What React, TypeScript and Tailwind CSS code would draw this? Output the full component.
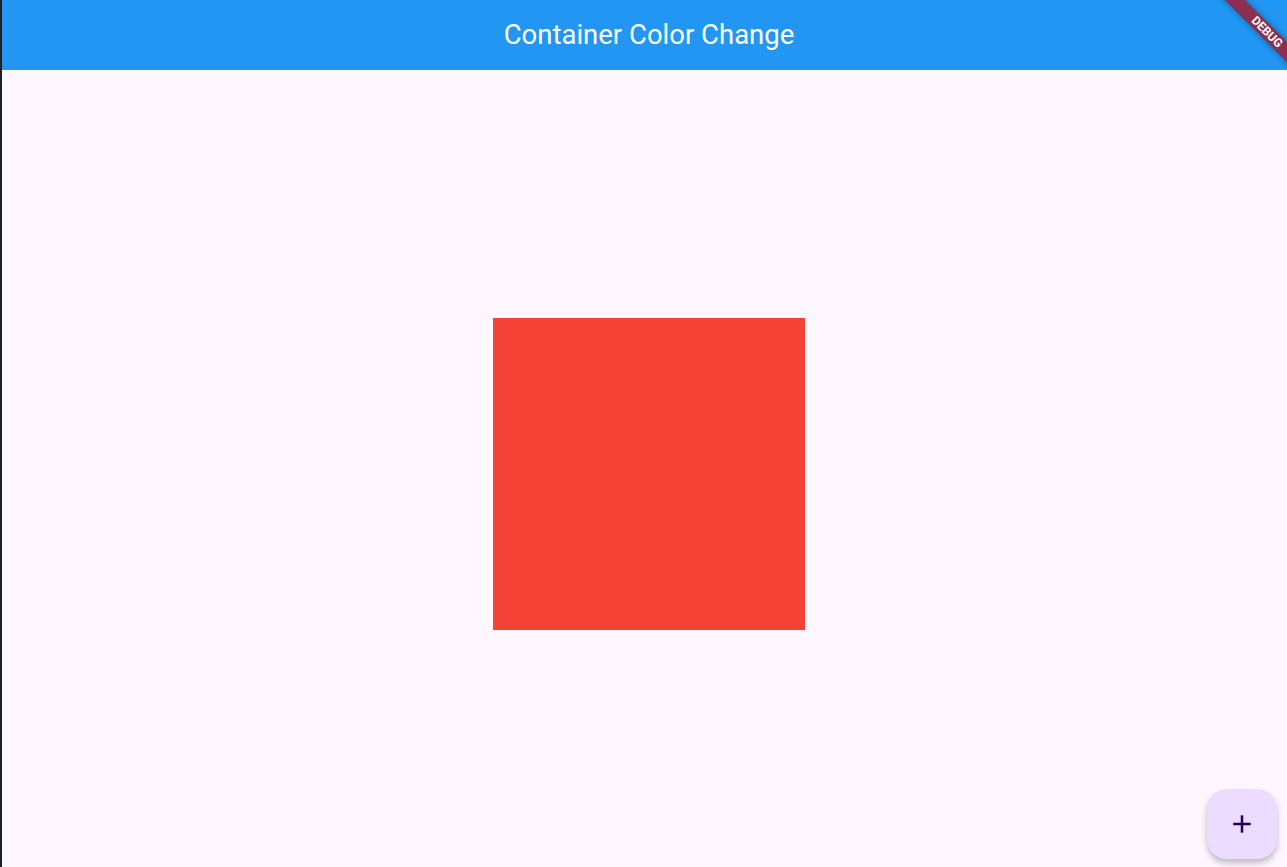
import React from "react";

const App: React.FC = () => {
  const [isRed, setIsRed] = React.useState(true);

  return (
    <div
      className="relative flex h-[867px] w-full overflow-hidden bg-[#fef7ff]"
      style={{ fontFamily: "Roboto, 'Liberation Sans', sans-serif" }}
    >
      {/* Left window edge */}
      <div className="w-[2px] shrink-0 bg-[#202124]" />

      <div className="flex flex-1 flex-col">
        {/* App bar */}
        <header className="flex h-[70px] shrink-0 items-center justify-center bg-[#2196f3] pl-[9px]">
          <h1 className="text-[27.5px] leading-none text-white">Container Color Change</h1>
        </header>

        {/* Body */}
        <main className="flex flex-1 items-center justify-center pl-[9px] pt-[11px]">
          <div
            className={`h-[312px] w-[312px] ${isRed ? "bg-[#f44336]" : "bg-[#2196f3]"}`}
          />
        </main>
      </div>

      {/* Debug banner */}
      <div className="absolute left-[1207px] top-[25px] flex h-[14px] w-[120px] rotate-45 items-center justify-center bg-[#8a2f50] shadow-[0_0_6px_rgba(0,0,0,0.4)]">
        <span className="text-[12px] font-bold leading-none text-white">DEBUG</span>
      </div>

      {/* FAB */}
      <button
        type="button"
        onClick={() => setIsRed(!isRed)}
        className="absolute left-[1207px] top-[789px] flex h-[70px] w-[70px] items-center justify-center rounded-[20px] bg-[#eaddff] shadow-[0_4px_6px_rgba(0,0,0,0.25)]"
      >
        <svg width="30" height="30" viewBox="0 0 24 24" fill="#21005d">
          <path d="M19 13h-6v6h-2v-6H5v-2h6V5h2v6h6v2z" />
        </svg>
      </button>
    </div>
  );
};

export default App;
